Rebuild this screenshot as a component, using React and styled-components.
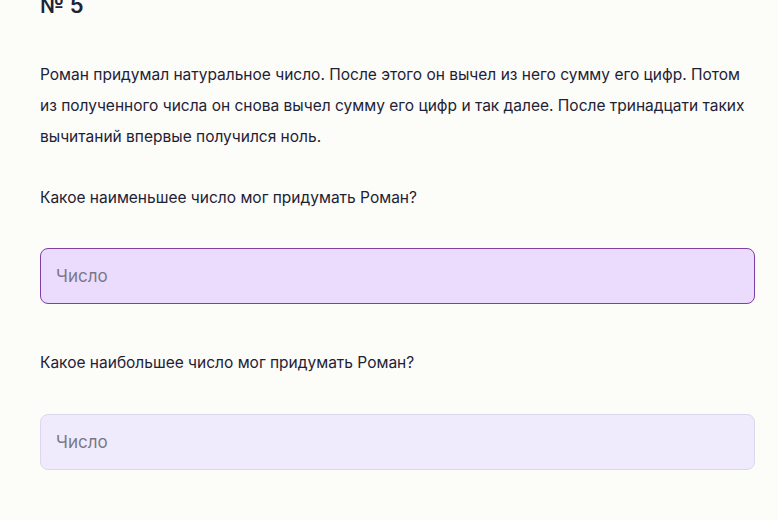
import styled, { createGlobalStyle } from 'styled-components';

const Global = createGlobalStyle`
	body {
		margin: 0;
		background: #fcfcf9;
		font-family: Inter, "Noto Sans", sans-serif;
		color: #1e2235;
	}
`;

const Page = styled.div`
	width: 715px;
	padding: 0 23px 0 40px;
	display: flex;
	flex-direction: column;
`;

const Title = styled.h2`
	margin: -9px 0 0;
	font-size: 22px;
	line-height: 28px;
	font-weight: 600;
`;

const Text = styled.p`
	margin: ${p => p.$top}px 0 0;
	max-width: 710px;
	font-size: 15.5px;
	line-height: 31px;
`;

const Field = styled.input`
	box-sizing: border-box;
	margin-top: ${p => p.$top}px;
	width: 100%;
	height: 56px;
	padding: 0 15px;
	border-radius: 8px;
	font: inherit;
	font-size: 17px;
	outline: none;
	border: 1px solid ${p => p.$active ? '#7e3fa6' : '#dcd6ee'};
	background: ${p => p.$active ? '#ebdcfd' : '#efebfc'};
	color: #1e2235;
	&::placeholder {
		color: #7b7787;
	}
`;

export default function App() {
	return (
		<>
			<Global />
			<Page>
				<Title>№ 5</Title>
				<Text $top={39.5}>
					Роман придумал натуральное число. После этого он вычел из него сумму его цифр. Потом из полученного числа он снова вычел сумму его цифр и так далее. После тринадцати таких вычитаний впервые получился ноль.
				</Text>
				<Text $top={30}>Какое наименьшее число мог придумать Роман?</Text>
				<Field $top={35.5} $active placeholder="Число" />
				<Text $top={43}>Какое наибольшее число мог придумать Роман?</Text>
				<Field $top={36} placeholder="Число" />
			</Page>
		</>
	);
}
